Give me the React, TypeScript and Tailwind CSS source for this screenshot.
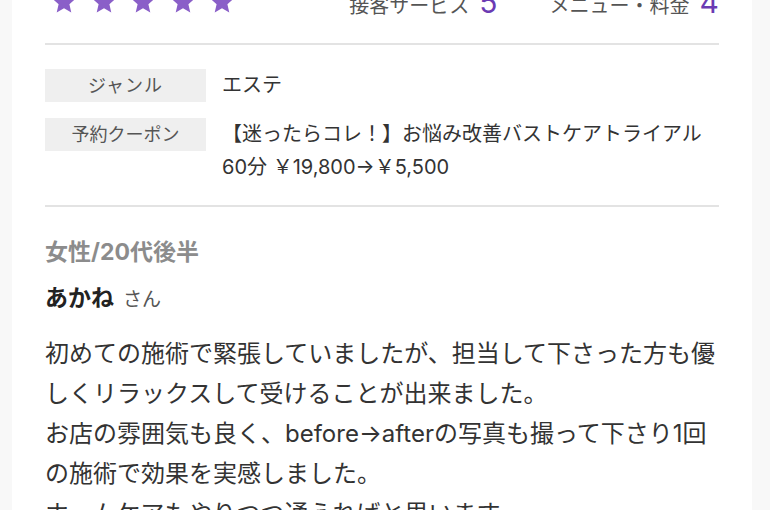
import React from "react";

const Star = () => (
  <svg width="24" height="24" viewBox="0 0 24 24" className="block shrink-0">
    <polygon
      points="12,0.4 15.4,8.0 23.6,8.7 17.4,14.2 19.3,22.6 12,18.2 4.7,22.6 6.6,14.2 0.4,8.7 8.6,8.0"
      fill="#8a5fc8"
    />
  </svg>
);

export default function App() {
  const font = { fontFamily: 'Inter, "Noto Sans CJK JP", "Noto Sans", sans-serif' };
  return (
    <div className="h-[510px] overflow-hidden bg-[#f8f8f8]" style={font}>
      <div className="ml-[12px] flex h-[600px] w-[740px] flex-col bg-white px-[33px]">
        {/* top rating row */}
        <div className="-mt-[10px] flex h-[24px] items-end justify-between">
          <div className="ml-[7px] flex gap-[15.5px]">
            <Star />
            <Star />
            <Star />
            <Star />
            <Star />
          </div>
          <div className="-mb-[3px] flex items-baseline text-[#555]">
            <span className="text-[20px] leading-none">接客サービス</span>
            <span className="ml-[10px] text-[30px] leading-none text-[#6b3bb3]">5</span>
            <span className="ml-[52px] text-[20px] leading-none">メニュー・料金</span>
            <span className="ml-[10px] text-[30px] leading-none text-[#6b3bb3]">4</span>
          </div>
        </div>

        <div className="mt-[29px] h-[2px] w-full bg-[#e3e3e3]" />

        {/* info rows */}
        <div className="mt-[24px] flex flex-col gap-[16px]">
          <div className="flex items-start">
            <div className="flex h-[33px] w-[161px] shrink-0 items-center justify-center bg-[#efefef] text-[18px] tracking-[1px] text-[#555]">
              ジャンル
            </div>
            <div className="ml-[16px] text-[20px] leading-[33px] text-[#333]">エステ</div>
          </div>
          <div className="flex items-start">
            <div className="flex h-[33px] w-[161px] shrink-0 items-center justify-center bg-[#efefef] text-[18px] text-[#555]">
              予約クーポン
            </div>
            <div className="ml-[16px] text-[20px] leading-[33px] text-[#333]">
              <span className="block whitespace-nowrap">【迷ったらコレ！】お悩み改善バストケアトライアル</span>
              <span className="block whitespace-nowrap">60分 ￥19,800→￥5,500</span>
            </div>
          </div>
        </div>

        <div className="mt-[21px] h-[2px] w-full bg-[#e3e3e3]" />

        {/* review */}
        <div className="mt-[29px] text-[23px] font-bold leading-[32px] text-[#8c8c8c]">
          女性/20代後半
        </div>
        <div className="mt-[12px] flex items-baseline leading-[36px]">
          <span className="text-[23px] font-bold text-[#222]">あかね</span>
          <span className="ml-[9px] text-[19px] text-[#555]">さん</span>
        </div>
        <div className="mt-[16px] text-[24px] leading-[40px] text-[#333]">
          <p className="whitespace-nowrap">初めての施術で緊張していましたが、担当して下さった方も優</p>
          <p className="whitespace-nowrap">しくリラックスして受けることが出来ました。</p>
          <p className="whitespace-nowrap">お店の雰囲気も良く、before→afterの写真も撮って下さり1回</p>
          <p className="whitespace-nowrap">の施術で効果を実感しました。</p>
          <p className="whitespace-nowrap">ホームケアもやりつつ通えればと思います。</p>
        </div>
      </div>
    </div>
  );
}
